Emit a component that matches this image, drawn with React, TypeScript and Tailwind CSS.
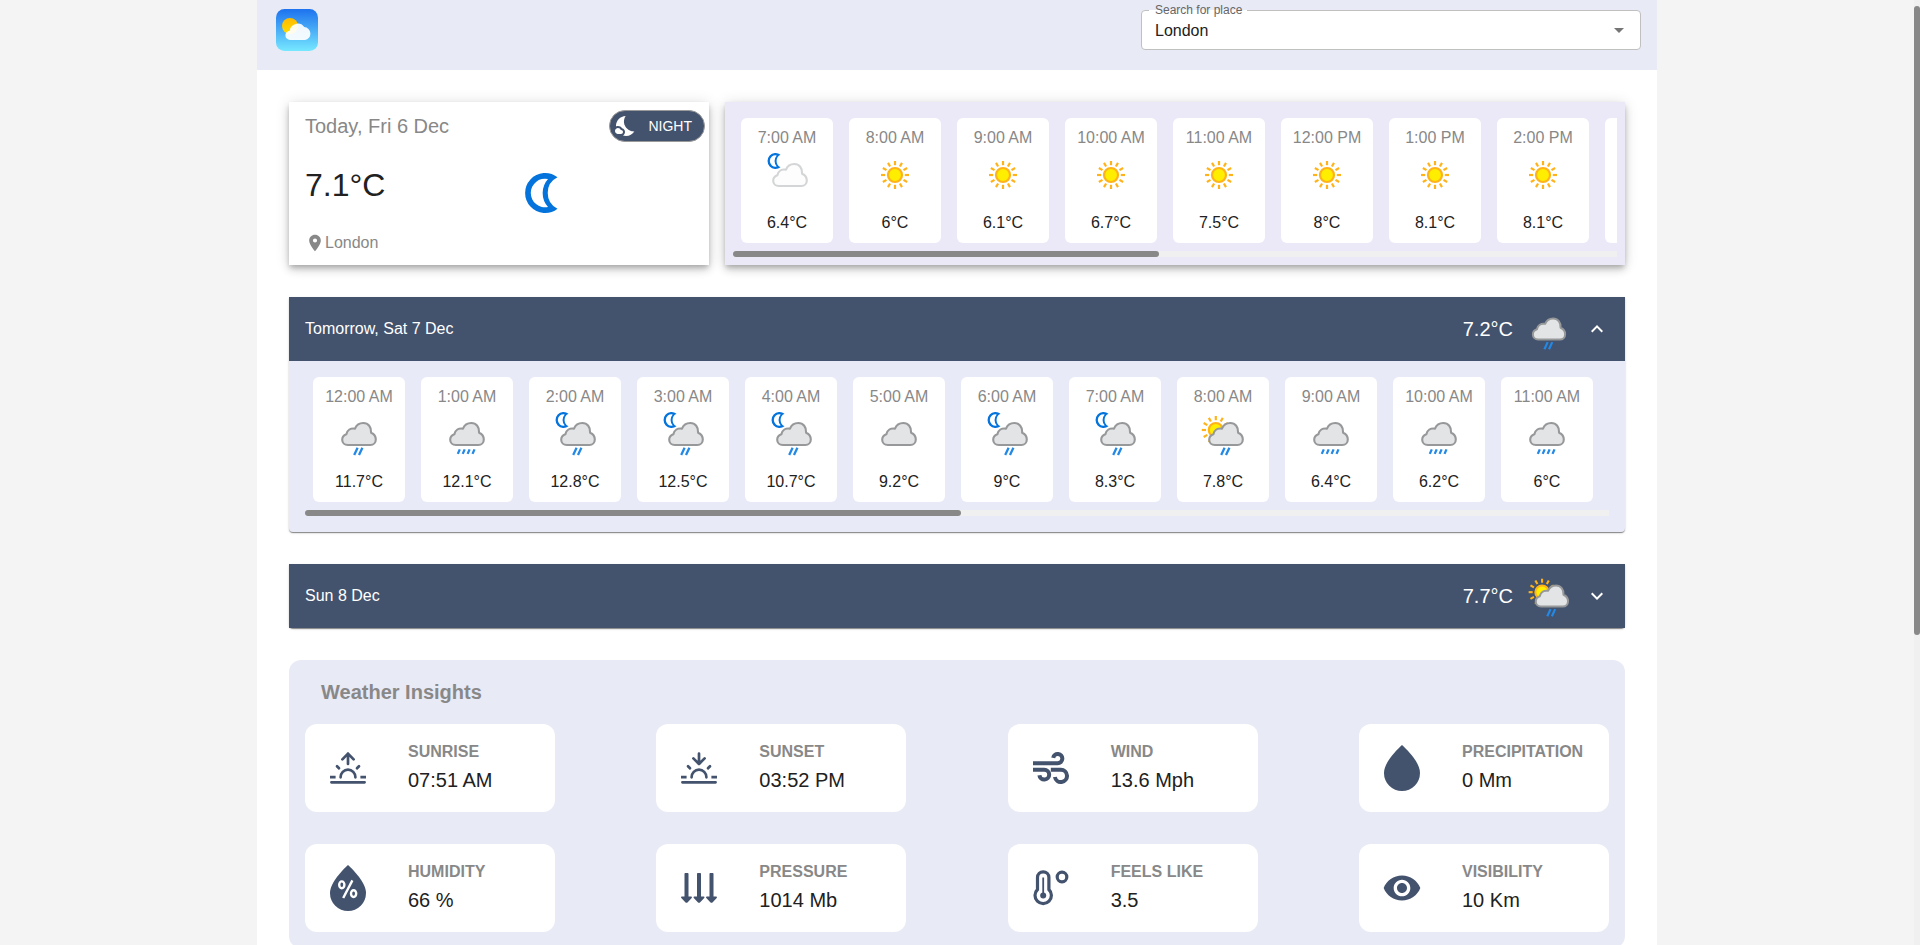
import React from "react";
import {
  MdArrowDropDown,
  MdExpandLess,
  MdExpandMore,
  MdLocationOn,
  MdNightsStay,
  MdVisibility,
} from "react-icons/md";

type Weather =
  | "clearNight"
  | "clearDay"
  | "partlyNight"
  | "cloudy"
  | "rain"
  | "drizzle"
  | "rainNight"
  | "rainDay";

type Hour = { time: string; weather: Weather; temp: string };

const todayHours: Hour[] = [
  { time: "7:00 AM", weather: "partlyNight", temp: "6.4°C" },
  { time: "8:00 AM", weather: "clearDay", temp: "6°C" },
  { time: "9:00 AM", weather: "clearDay", temp: "6.1°C" },
  { time: "10:00 AM", weather: "clearDay", temp: "6.7°C" },
  { time: "11:00 AM", weather: "clearDay", temp: "7.5°C" },
  { time: "12:00 PM", weather: "clearDay", temp: "8°C" },
  { time: "1:00 PM", weather: "clearDay", temp: "8.1°C" },
  { time: "2:00 PM", weather: "clearDay", temp: "8.1°C" },
];

const tomorrowHours: Hour[] = [
  { time: "12:00 AM", weather: "rain", temp: "11.7°C" },
  { time: "1:00 AM", weather: "drizzle", temp: "12.1°C" },
  { time: "2:00 AM", weather: "rainNight", temp: "12.8°C" },
  { time: "3:00 AM", weather: "rainNight", temp: "12.5°C" },
  { time: "4:00 AM", weather: "rainNight", temp: "10.7°C" },
  { time: "5:00 AM", weather: "cloudy", temp: "9.2°C" },
  { time: "6:00 AM", weather: "rainNight", temp: "9°C" },
  { time: "7:00 AM", weather: "rainNight", temp: "8.3°C" },
  { time: "8:00 AM", weather: "rainDay", temp: "7.8°C" },
  { time: "9:00 AM", weather: "drizzle", temp: "6.4°C" },
  { time: "10:00 AM", weather: "drizzle", temp: "6.2°C" },
  { time: "11:00 AM", weather: "drizzle", temp: "6°C" },
];

function Moon() {
  return (
    <>
      <path
        d="M32.5 4.3A20 20 0 1 0 32.5 35.7A17.5 17.5 0 0 1 32.5 4.3z"
        fill="#0474dc"
      />
      <path d="M23 6A14.3 14.3 0 1 0 23 34A21 21 0 0 1 23 6z" fill="#fff" />
    </>
  );
}

function Sun() {
  return (
    <g stroke="#ffb31a" strokeWidth="2.2">
      {[0, 30, 60, 90, 120, 150, 180, 210, 240, 270, 300, 330].map((a) => (
        <path key={a} d="M0 -9.8V-14" transform={`rotate(${a})`} />
      ))}
      <circle r="7" fill="#ffee00" />
    </g>
  );
}

function Cloud({ light = false }: { light?: boolean }) {
  return (
    <path
      d="M16.8 36H39.3C42.6 36 44.8 33.5 44.8 30.4C44.8 27.3 43 25 40.1 23.7C40.6 18 37.2 14 32.3 14C28.6 14 25.4 16 24 19.6C19.6 18.9 16.2 21 15.4 25.2C12.9 26 11.2 28.1 11.2 30.7C11.2 33.8 13.6 36 16.8 36z"
      fill={light ? "#fdfdfd" : "#e3e4e6"}
      stroke={light ? "#d3d5d6" : "#979899"}
      strokeWidth="2.1"
      strokeLinejoin="round"
    />
  );
}

function WeatherIcon({ kind, className }: { kind: Weather; className: string }) {
  const night = kind === "partlyNight" || kind === "rainNight";
  const day = kind === "rainDay";
  const cloudy = kind !== "clearDay" && kind !== "clearNight";
  const twoDrops = kind === "rain" || kind === "rainNight" || kind === "rainDay";
  return (
    <svg viewBox="0 0 50 50" className={className} fill="none" aria-hidden="true">
      {kind === "clearDay" && (
        <g transform="translate(25 25)">
          <Sun />
        </g>
      )}
      {kind === "clearNight" && (
        <g transform="translate(6 5)">
          <Moon />
        </g>
      )}
      {night && (
        <g transform="translate(5.5 3) scale(.4)">
          <Moon />
        </g>
      )}
      {day && (
        <g transform="translate(17.8 21)">
          <Sun />
        </g>
      )}
      {cloudy && (
        <g transform={night || day ? undefined : "translate(-3 0)"}>
          <Cloud light={kind === "partlyNight"} />
          {twoDrops && (
            <path d="M26.6 38.7L23.2 46M31.4 38.7L28 46" stroke="#2389e6" strokeWidth="2.3" />
          )}
          {kind === "drizzle" && (
            <path
              d="M20.8 40.4L18.8 44.9M25.7 40.4L23.7 44.9M30.6 40.4L28.6 44.9M35.5 40.4L33.5 44.9"
              stroke="#2389e6"
              strokeWidth="2.3"
            />
          )}
        </g>
      )}
    </svg>
  );
}

function HourCard({ hour }: { hour: Hour }) {
  return (
    <li className="flex w-[92px] shrink-0 flex-col items-center rounded-md bg-white py-2 leading-6">
      <span className="whitespace-nowrap text-[#888]">{hour.time}</span>
      <WeatherIcon kind={hour.weather} className="mb-[11px] size-[50px]" />
      <span>{hour.temp}</span>
    </li>
  );
}

function HourStrip({
  hours,
  thumb,
  more = false,
}: {
  hours: Hour[];
  thumb: string;
  more?: boolean;
}) {
  return (
    <div>
      <ul className="flex gap-4 overflow-x-auto p-2">
        {hours.map((h) => (
          <HourCard key={h.time} hour={h} />
        ))}
        {more && <li className="w-[92px] shrink-0 rounded-md bg-white" />}
      </ul>
      <div className="h-1.5 bg-[#f0f0f0]">
        <div className={`h-full rounded-full bg-[#888] ${thumb}`} />
      </div>
    </div>
  );
}

function DayBar({
  label,
  temp,
  weather,
  open,
}: {
  label: string;
  temp: string;
  weather: Weather;
  open: boolean;
}) {
  return (
    <button
      type="button"
      aria-expanded={open}
      className="flex h-16 w-full items-center bg-[#43526d] px-4 text-left text-white"
    >
      <span className="flex-1">{label}</span>
      <span className="text-xl">{temp}</span>
      <WeatherIcon kind={weather} className="mx-3 size-12" />
      {open ? <MdExpandLess size={24} /> : <MdExpandMore size={24} />}
    </button>
  );
}

function SunHorizon({ arrow }: { arrow: string }) {
  return (
    <svg
      viewBox="0 0 36 32"
      className="w-9"
      fill="none"
      stroke="currentColor"
      strokeWidth="2.7"
      strokeLinecap="round"
      strokeLinejoin="round"
      aria-hidden="true"
    >
      <path d="M1.4 30.3H34.6M7 14.2l2 2.1M29 14.2l-2 2.1" />
      <path d="M10.6 25.3a7.4 7.6 0 0 1 14.8 0" />
      <path d="M0 25.1h5.6M30.4 25.1H36" strokeLinecap="butt" />
      <path d={arrow} />
    </svg>
  );
}

function Drop({ percent = false }: { percent?: boolean }) {
  return (
    <svg viewBox="0 0 36 46" className="w-9" aria-hidden="true">
      <path
        d="M18 0C12.5 5.2 0 17.5 0 28A18 18 0 0 0 36 28C36 17.5 23.5 5.2 18 0z"
        fill="currentColor"
      />
      {percent && (
        <g fill="none" stroke="#fff" strokeWidth="2.4">
          <ellipse cx="11.8" cy="19.8" rx="2.6" ry="3.4" />
          <ellipse cx="23.6" cy="28.6" rx="2.6" ry="3.4" />
          <path d="M22.4 15.4L13.2 33" />
        </g>
      )}
    </svg>
  );
}

function WindIcon() {
  return (
    <svg
      viewBox="0 0 36 32"
      className="w-9"
      fill="none"
      stroke="currentColor"
      strokeWidth="4"
      aria-hidden="true"
    >
      <path d="M0 11.2H24.7A4.6 4.6 0 1 0 20.2 5.8" />
      <path d="M0 17.8H11.3A4.9 4.9 0 1 1 6.4 23.2" />
      <path d="M17.8 17.8H27.9A6.1 6.1 0 1 1 21.9 25" />
    </svg>
  );
}

function PressureIcon() {
  return (
    <svg viewBox="0 0 36 30" className="w-9" fill="currentColor" aria-hidden="true">
      {[5.5, 18, 30.5].map((x) => (
        <path
          key={x}
          transform={`translate(${x} 0)`}
          d="M-1.2 0H1.2Q2 0 2 .8V23.6H4.6Q6 23.8 5.2 25L1.2 29.3Q0 30.3-1.2 29.3L-5.2 25Q-6 23.8-4.6 23.6H-2V.8Q-2 0-1.2 0z"
        />
      ))}
    </svg>
  );
}

function ThermometerIcon() {
  return (
    <svg
      viewBox="0 0 36 36"
      className="w-9"
      fill="none"
      stroke="currentColor"
      strokeWidth="3.2"
      aria-hidden="true"
    >
      <path d="M4.5 7.5A5.7 5.7 0 0 1 15.9 7.5V19.5A8.2 8.2 0 1 1 4.5 19.5z" />
      <path d="M10.2 7.5V25" strokeWidth="1.8" />
      <circle cx="10.2" cy="25.5" r="3" fill="currentColor" stroke="none" />
      <circle cx="29" cy="7" r="4.8" />
    </svg>
  );
}

const insights = [
  {
    label: "SUNRISE",
    value: "07:51 AM",
    icon: <SunHorizon arrow="M18 12V1.6M12.4 7.4L18 1.6l5.6 5.8" />,
  },
  {
    label: "SUNSET",
    value: "03:52 PM",
    icon: <SunHorizon arrow="M18 1.6V12M12.4 6.4L18 12l5.6-5.6" />,
  },
  { label: "WIND", value: "13.6 Mph", icon: <WindIcon /> },
  { label: "PRECIPITATION", value: "0 Mm", icon: <Drop /> },
  { label: "HUMIDITY", value: "66 %", icon: <Drop percent /> },
  { label: "PRESSURE", value: "1014 Mb", icon: <PressureIcon /> },
  { label: "FEELS LIKE", value: "3.5", icon: <ThermometerIcon /> },
  {
    label: "VISIBILITY",
    value: "10 Km",
    icon: <MdVisibility className="-mx-0.5 size-10" />,
  },
];

export default function App() {
  return (
    <div className="flex h-screen bg-[#f4f4f4] font-['Liberation_Sans',Arial,sans-serif] text-base text-[#212121]">
      <div className="flex-1 overflow-y-auto">
        <div className="mx-auto max-w-[1400px] bg-white">
          <header className="flex items-start justify-between bg-[#e8eaf6] pt-[9px] pr-4 pb-[19px] pl-[19px]">
            <svg viewBox="0 0 42 42" className="size-[42px]" role="img" aria-label="Weather">
              <defs>
                <linearGradient id="sky" x1="0" y1="0" x2="0" y2="1">
                  <stop offset="0" stopColor="#1d72ee" />
                  <stop offset="1" stopColor="#76e8ff" />
                </linearGradient>
                <linearGradient id="sun" x1="0" y1="0" x2="0" y2="1">
                  <stop offset="0" stopColor="#ffba00" />
                  <stop offset="1" stopColor="#ffdc00" />
                </linearGradient>
              </defs>
              <rect width="42" height="42" rx="8.5" fill="url(#sky)" />
              <circle cx="14" cy="17" r="8" fill="url(#sun)" />
              <path
                d="M14.3 31A4.6 4.6 0 0 1 13.7 21.8A8 8 0 0 1 28.2 18.1A6.5 6.5 0 0 1 29 31z"
                fill="#fff"
                fillOpacity=".92"
              />
            </svg>
            <div className="relative mt-px w-[500px]">
              <select
                id="place"
                defaultValue="London"
                className="block h-10 w-full appearance-none rounded border border-[#c0c0c0] bg-white px-[13px] pt-0.5 outline-none"
              >
                <option>London</option>
              </select>
              <span className="absolute top-0 left-2 h-px w-[98px] bg-white" />
              <label
                htmlFor="place"
                className="absolute -top-2 left-3.5 text-xs leading-4 text-[#666]"
              >
                Search for place
              </label>
              <MdArrowDropDown
                size={24}
                className="pointer-events-none absolute top-2 right-2.5 text-[#757575]"
              />
            </div>
          </header>

          <main className="flex flex-col gap-8 p-8 pb-4">
            <div className="flex gap-4">
              <section className="w-[420px] shrink-0 shadow-[0_3px_5px_-1px_rgba(0,0,0,0.2),0_5px_8px_0_rgba(0,0,0,0.14),0_1px_14px_0_rgba(0,0,0,0.12)]">
                <div className="flex items-center justify-between pt-2 pr-1 pl-4">
                  <h2 className="text-xl leading-8 text-[#888]">Today, Fri 6 Dec</h2>
                  <span className="flex h-8 w-24 items-center justify-between rounded-full border border-[#9a9a9a] bg-[#43526d] pr-3 pl-1 text-sm text-white">
                    <MdNightsStay size={24} />
                    NIGHT
                  </span>
                </div>
                <div className="grid grid-cols-2 px-4">
                  <div className="pt-[23px]">
                    <p className="text-[32px] leading-10">7.1°C</p>
                    <p className="mt-[26px] flex items-center leading-6 text-[#888]">
                      <MdLocationOn size={20} />
                      London
                    </p>
                  </div>
                  <WeatherIcon kind="clearNight" className="mt-[26px] ml-5 size-[50px]" />
                </div>
              </section>

              <section className="min-w-0 flex-1 bg-[#ebe9f7] p-2 shadow-[0_3px_5px_-1px_rgba(0,0,0,0.2),0_5px_8px_0_rgba(0,0,0,0.14),0_1px_14px_0_rgba(0,0,0,0.12)]">
                <HourStrip hours={todayHours} thumb="w-[48.2%]" more />
              </section>
            </div>

            <section className="rounded-b bg-[#e9eaf8] shadow-[0_2px_1px_-1px_rgba(0,0,0,0.2),0_1px_1px_0_rgba(0,0,0,0.28),0_1px_3px_0_rgba(0,0,0,0.12)]">
              <DayBar label="Tomorrow, Sat 7 Dec" temp="7.2°C" weather="rain" open />
              <div className="px-4 pt-2 pb-4">
                <HourStrip hours={tomorrowHours} thumb="w-[50.3%]" />
              </div>
            </section>

            <section className="rounded-b shadow-[0_2px_1px_-1px_rgba(0,0,0,0.2),0_1px_1px_0_rgba(0,0,0,0.28),0_1px_3px_0_rgba(0,0,0,0.12)]">
              <DayBar label="Sun 8 Dec" temp="7.7°C" weather="rainDay" open={false} />
            </section>

            <section className="rounded-xl bg-[#e8eaf6] p-4">
              <h2 className="px-4 text-xl leading-8 font-bold text-[#888]">Weather Insights</h2>
              <div className="mt-4 grid grid-cols-[repeat(4,250px)] justify-between gap-y-8">
                {insights.map((item) => (
                  <div
                    key={item.label}
                    className="flex items-center gap-[42px] rounded-xl bg-white py-4 pl-[25px]"
                  >
                    <div className="flex h-14 w-9 shrink-0 items-center justify-center text-[#43526d]">
                      {item.icon}
                    </div>
                    <div>
                      <h3 className="leading-6 font-bold text-[#888]">{item.label}</h3>
                      <p className="text-xl leading-8">{item.value}</p>
                    </div>
                  </div>
                ))}
              </div>
            </section>
          </main>
        </div>
      </div>
      <div className="w-1.5 bg-[#f0f0f0] pt-1.5">
        <div className="h-[67%] rounded-full bg-[#888]" />
      </div>
    </div>
  );
}
